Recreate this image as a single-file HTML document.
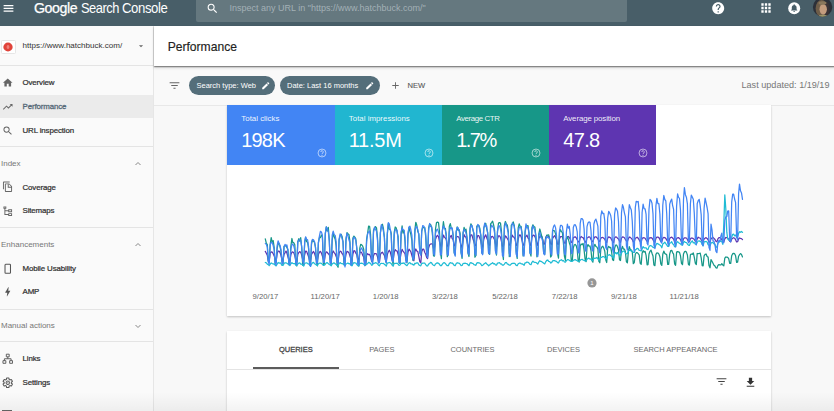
<!DOCTYPE html>
<html><head><meta charset="utf-8">
<style>
*{box-sizing:border-box;margin:0;padding:0}
html,body{width:834px;height:411px;overflow:hidden;background:#f8f8f8;font-family:"Liberation Sans",sans-serif;color:#222}
.abs{position:absolute}
.hw{color:#fff;line-height:17px;white-space:nowrap;transform-origin:0 0}
#hdr{left:0;top:0;width:834px;height:26.200px;background:#485e68}
#search{left:196px;top:0;width:431px;height:22px;background:#65787f;border-radius:0 0 2px 2px}
#side{left:0;top:26.200px;width:153.500px;height:385px;background:#fafafa;border-right:1px solid #e6e6e6}
#titlebar{z-index:2;left:153.500px;top:26.200px;width:681px;height:40.300px;background:#fff;box-shadow:0 .5px 1.200px rgba(0,0,0,.5),0 2px 3px rgba(0,0,0,.12)}
#fbar{left:153.500px;top:66.500px;width:681px;height:39px;background:#f9f9f9;border-bottom:1px solid #e8e8e8}
.navt{left:22.500px;font-size:7.900px;letter-spacing:-.12px;line-height:10px;color:#303030;-webkit-text-stroke:.22px #303030;white-space:nowrap}
.navt.sel{color:#566a78;-webkit-text-stroke:.3px #566a78}
.sec{left:1px;font-size:8px;line-height:10px;color:#777;white-space:nowrap}
.hr{left:0;width:153px;height:1px;background:#e4e4e4}
.card{background:#fff;box-shadow:0 1px 2px rgba(0,0,0,.22)}
.tile{top:105.300px;height:60.100px;color:#fff}
.tile .l{position:absolute;left:14.300px;top:8.900px;font-size:7.900px;line-height:10px;white-space:nowrap;color:rgba(255,255,255,.92)}
.tile .v{position:absolute;left:14.200px;top:23.500px;font-size:20px;line-height:23px;white-space:nowrap}
.chip{top:75.500px;height:19.500px;border-radius:10px;background:#546e7a;color:#fff;font-size:7.500px;line-height:19.500px;padding-left:7.500px;white-space:nowrap}
.xl{top:292.200px;width:40px;text-align:center;font-size:7.700px;line-height:10px;color:#666;white-space:nowrap}
.tab{top:345.200px;font-size:7.500px;line-height:10px;color:#6a6a6a;text-align:center;white-space:nowrap}
.tab.tsel{color:#444;-webkit-text-stroke:.28px #444}
</style></head><body>
<div id="hdr" class="abs"></div>
<div id="search" class="abs"></div>
<svg class="abs" style="left:2px;top:2px" width="13" height="13" viewBox="0 0 24 24"><path d="M3 18h18v-2.300H3V18zm0-5h18v-2.300H3V13zm0-7.300v2.300h18V5.700H3z" fill="#fff"/></svg>
<div class="abs" style="left:34.400px;top:-1.300px;display:flex;align-items:baseline;height:17px;line-height:17px"><span class="hw" style="display:block;width:46.700px;font-size:15px;letter-spacing:-.45px;transform:scaleX(.946);-webkit-text-stroke:.25px #fff">Google</span><span class="hw" style="display:block;width:40.500px;font-size:14.300px;letter-spacing:-.55px;transform:scaleX(.9)">Search</span><span class="hw" style="display:block;font-size:14.300px;letter-spacing:-.45px;transform:scaleX(.92)">Console</span></div>
<svg class="abs" style="left:206px;top:1.500px" width="13" height="13" viewBox="0 0 24 24"><path d="M15.500 14h-.79l-.28-.27A6.470 6.470 0 0016 9.500 6.500 6.500 0 109.500 16c1.610 0 3.090-.59 4.230-1.570l.27.280v.790l5 4.990L20.490 19l-4.990-5zm-6 0C7.010 14 5 11.990 5 9.500S7.010 5 9.500 5 14 7.010 14 9.500 11.990 14 9.500 14z" fill="#fff"/></svg>
<div class="abs" style="left:229.600px;top:2.500px;font-size:9px;color:#a3b0b6;line-height:11px;white-space:nowrap">Inspect any URL in "https://www.hatchbuck.com/"</div>
<svg class="abs" style="left:711px;top:0.600px" width="14.400" height="14.400" viewBox="0 0 24 24"><path d="M12 2C6.480 2 2 6.480 2 12s4.480 10 10 10 10-4.480 10-10S17.520 2 12 2zm1 17h-2v-2h2v2zm2.070-7.750l-.9.920C13.450 12.900 13 13.500 13 15h-2v-.5c0-1.100.45-2.100 1.170-2.830l1.240-1.260c.37-.36.590-.86.590-1.410 0-1.100-.9-2-2-2s-2 .9-2 2H8c0-2.210 1.790-4 4-4s4 1.790 4 4c0 .88-.36 1.680-.93 2.250z" fill="#fff"/></svg>
<svg class="abs" style="left:759px;top:0.800px" width="14" height="14" viewBox="0 0 24 24"><path d="M4 8h4V4H4v4zm6 12h4v-4h-4v4zm-6 0h4v-4H4v4zm0-6h4v-4H4v4zm6 0h4v-4h-4v4zm6-10v4h4V4h-4zm-6 4h4V4h-4v4zm6 6h4v-4h-4v4zm0 6h4v-4h-4v4z" fill="#fff"/></svg>
<svg class="abs" style="left:787.300px;top:0.600px" width="14.400" height="14.400" viewBox="0 0 24 24"><circle cx="12" cy="12" r="10" fill="#fff"/><path d="M12 18.500c.83 0 1.500-.67 1.500-1.500h-3c0 .83.670 1.500 1.500 1.500zm4-4.500v-3c0-1.860-1.060-3.420-2.900-3.830V6.700c0-.6-.5-1.100-1.100-1.100s-1.100.5-1.100 1.100v.470C9.060 7.580 8 9.130 8 11v3l-1.200 1.200v.6h10.400v-.6L16 14z" fill="#485e68"/></svg>
<svg class="abs" style="left:812px;top:-4px" width="22" height="22" viewBox="812 -4 22 22"><defs><clipPath id="av"><circle cx="822.600" cy="7" r="9.700"/></clipPath></defs><g clip-path="url(#av)"><rect x="812" y="-4" width="22" height="22" fill="#2c3039"/><ellipse cx="821.600" cy="8.500" rx="6" ry="8.500" fill="#6e5d49"/><ellipse cx="826.500" cy="9" rx="3" ry="7" fill="#3a3236"/><ellipse cx="823.200" cy="9.300" rx="3.700" ry="5.300" fill="#c49c7e"/><ellipse cx="822.500" cy="3" rx="4" ry="1.800" fill="#8a775c"/><ellipse cx="823" cy="16.500" rx="4.500" ry="1.800" fill="#9a9468"/></g></svg>

<div id="side" class="abs"></div>
<div id="titlebar" class="abs"></div>
<div id="fbar" class="abs"></div>
<div class="abs" style="z-index:3;left:167.700px;top:39.500px;font-size:12.100px;color:#222;line-height:14px;-webkit-text-stroke:.15px #222">Performance</div>
<div class="abs" style="left:1px;top:39.600px;width:14.500px;height:14px;background:#fff;border:1px solid #e6e6e6;border-radius:1.500px"></div>
<svg class="abs" style="left:3.200px;top:41.600px" width="10" height="10" viewBox="0 0 18 18"><ellipse cx="9" cy="9" rx="8.400" ry="7.900" fill="#e0433a"/><ellipse cx="9" cy="9" rx="2.600" ry="3.600" fill="#ee7f78"/></svg>
<div class="abs" style="left:22.500px;top:41.300px;font-size:8.050px;color:#333;line-height:10px;white-space:nowrap">https://www.hatchbuck.com/</div>
<svg class="abs" style="left:136px;top:41px" width="10" height="10" viewBox="0 0 24 24"><path d="M7 10l5 5 5-5z" fill="#666"/></svg>
<div class="abs hr" style="top:65px"></div>
<div class="abs navt" style="top:77.9px">Overview</div><svg class="abs ic" style="left:1.500px;top:76.6px" width="11.500" height="11.500" viewBox="0 0 24 24"><path d="M10 20v-6h4v6h5v-8h3L12 3 2 12h3v8z" fill="#666"/></svg><div class="abs" style="left:0;top:94.7px;width:153px;height:23px;background:#ebebeb"></div><div class="abs navt sel" style="top:101.8px">Performance</div><svg class="abs ic" style="left:1.500px;top:100.5px" width="11.500" height="11.500" viewBox="0 0 24 24"><path d="M16 6l2.29 2.29-4.88 4.88-4-4L2 16.59 3.41 18l6-6 4 4 6.3-6.29L22 12V6z" fill="#666"/></svg><div class="abs navt" style="top:125.8px">URL inspection</div><svg class="abs ic" style="left:1.500px;top:124.5px" width="11.500" height="11.500" viewBox="0 0 24 24"><path d="M15.5 14h-.79l-.28-.27A6.47 6.47 0 0016 9.5 6.5 6.5 0 109.5 16c1.61 0 3.09-.59 4.23-1.57l.27.28v.79l5 4.99L20.490 19l-4.990-5zm-6 0C7.010 14 5 11.990 5 9.500S7.010 5 9.500 5 14 7.010 14 9.500 11.990 14 9.500 14z" fill="#666"/></svg><div class="abs hr" style="top:146px"></div><div class="abs sec" style="top:158.8px">Index</div><svg class="abs" style="left:132px;top:158.0px" width="12" height="12" viewBox="0 0 24 24"><path d="M7 14 L12 9 L17 14" fill="none" stroke="#888" stroke-width="2"/></svg><div class="abs navt" style="top:182.7px">Coverage</div><svg class="abs ic" style="left:1.500px;top:181.4px" width="11.500" height="11.500" viewBox="0 0 24 24"><path d="M16 1H4c-1.100 0-2 .9-2 2v14h2V3h12V1zm-1 4l6 6v10c0 1.100-.9 2-2 2H7.990C6.890 23 6 22.100 6 21l.010-14c0-1.100.89-2 1.990-2h7zm-1 7h5.500L14 6.500V12zM8 7v14h11v-7h-7V7z" fill="#666" fill-rule="evenodd"/></svg><div class="abs navt" style="top:206.4px">Sitemaps</div><svg class="abs ic" style="left:1.500px;top:205.1px" width="11.500" height="11.500" viewBox="0 0 24 24"><path d="M3 3h6v5H7v3h6V9h8v6h-8v-2H7v6h6v-2h8v6h-8v-2H5V8H3zm2 2v1h2V5zm10 6v2h4v-2zm0 8v2h4v-2z" fill="#666" fill-rule="evenodd"/></svg><div class="abs hr" style="top:227px"></div><div class="abs sec" style="top:239.6px">Enhancements</div><svg class="abs" style="left:132px;top:238.8px" width="12" height="12" viewBox="0 0 24 24"><path d="M7 14 L12 9 L17 14" fill="none" stroke="#888" stroke-width="2"/></svg><div class="abs navt" style="top:263.8px">Mobile Usability</div><svg class="abs ic" style="left:1.500px;top:262.5px" width="11.500" height="11.500" viewBox="0 0 24 24"><rect x="6.300" y="2.700" width="11.400" height="18.600" rx="1.500" fill="none" stroke="#555" stroke-width="2.200"/></svg><div class="abs navt" style="top:287.4px">AMP</div><svg class="abs ic" style="left:1.500px;top:286.1px" width="11.500" height="11.500" viewBox="0 0 24 24"><path d="M11 21.500h-1l1-7.500H7.200c-.6 0-.6-.3-.4-.7C8.500 10.400 10.400 7.200 13 2.500h1l-1 7.500h3.800c.5 0 .6.300.4.600C13 17.500 11 21.500 11 21.500z" fill="#555"/></svg><div class="abs hr" style="top:308.500px"></div><div class="abs sec" style="top:320.7px">Manual actions</div><svg class="abs" style="left:132px;top:319.9px" width="12" height="12" viewBox="0 0 24 24"><path d="M7 10 L12 15 L17 10" fill="none" stroke="#888" stroke-width="2"/></svg><div class="abs hr" style="top:341px"></div><div class="abs navt" style="top:354.4px">Links</div><svg class="abs ic" style="left:1.500px;top:353.1px" width="11.500" height="11.500" viewBox="0 0 24 24"><path d="M9 2.500h6v5.500H9zM12 8v4M5 16v-4h14v4M2 16h6v5.500H2zM16 16h6v5.500h-6z" fill="none" stroke="#555" stroke-width="1.900"/></svg><div class="abs navt" style="top:378.4px">Settings</div><svg class="abs ic" style="left:1.500px;top:377.1px" width="11.500" height="11.500" viewBox="0 0 24 24"><path d="M19.430 12.980c.04-.32.07-.64.07-.98s-.03-.66-.07-.98l2.110-1.650c.19-.15.24-.42.12-.64l-2-3.460c-.12-.22-.39-.3-.61-.22l-2.490 1c-.52-.4-1.080-.73-1.690-.98l-.38-2.650C14.460 2.180 14.250 2 14 2h-4c-.25 0-.46.18-.49.42l-.38 2.650c-.61.25-1.170.59-1.690.98l-2.490-1c-.23-.09-.49 0-.61.22l-2 3.460c-.13.22-.07.49.12.64l2.110 1.650c-.04.32-.07.65-.07.980s.03.660.07.980l-2.110 1.650c-.19.150-.24.420-.12.640l2 3.460c.12.220.39.300.61.220l2.490-1c.52.400 1.080.730 1.690.980l.38 2.650c.03.240.24.420.49.420h4c.25 0 .46-.18.490-.42l.38-2.650c.61-.25 1.170-.59 1.690-.98l2.490 1c.23.090.49 0 .61-.22l2-3.460c.12-.22.07-.49-.12-.64l-2.110-1.650zM12 15.500c-1.930 0-3.500-1.570-3.500-3.500s1.570-3.500 3.500-3.500 3.500 1.570 3.500 3.500-1.570 3.500-3.500 3.500z" fill="none" stroke="#555" stroke-width="2.100"/><circle cx="12" cy="12" r="1.200" fill="#555"/></svg><div class="abs" style="left:2px;top:409.600px;width:10px;height:1.400px;background:#666"></div>
<svg class="abs" style="left:168px;top:78.500px" width="13" height="13" viewBox="0 0 24 24"><path d="M10 18h4v-2h-4v2zM3 6v2h18V6H3zm3 7h12v-2H6v2z" fill="#666"/></svg>
<div class="abs chip" style="left:189px;width:86px">Search type: Web</div>
<svg class="abs" style="left:260.500px;top:80.500px" width="9.500" height="9.500" viewBox="0 0 24 24"><path d="M3 17.250V21h3.750L17.810 9.940l-3.750-3.750L3 17.250zM20.710 7.040c.39-.39.39-1.020 0-1.410l-2.340-2.340c-.39-.39-1.020-.39-1.410 0l-1.830 1.830 3.750 3.750 1.830-1.830z" fill="#fff"/></svg>
<div class="abs chip" style="left:279.500px;width:100px">Date: Last 16 months</div>
<svg class="abs" style="left:364.500px;top:80.500px" width="9.500" height="9.500" viewBox="0 0 24 24"><path d="M3 17.250V21h3.750L17.810 9.940l-3.750-3.750L3 17.250zM20.710 7.040c.39-.39.39-1.020 0-1.410l-2.340-2.340c-.39-.39-1.020-.39-1.410 0l-1.830 1.830 3.750 3.750 1.830-1.830z" fill="#fff"/></svg>
<svg class="abs" style="left:390px;top:79.500px" width="11" height="11" viewBox="0 0 24 24"><path d="M19 13h-6v6h-2v-6H5v-2h6V5h2v6h6v2z" fill="#666"/></svg>
<div class="abs" style="left:407.500px;top:81px;font-size:7.600px;line-height:10px;color:#5a5a5a;-webkit-text-stroke:.12px #5a5a5a">NEW</div>
<div class="abs" style="left:741.500px;top:80.200px;font-size:9.100px;line-height:10px;color:#777;white-space:nowrap">Last updated: 1/19/19</div>

<div class="abs card" style="left:227px;top:105px;width:543.500px;height:211.300px"></div>
<div class="abs tile" style="left:227.0px;width:107.5px;background:#4285f4"><div class="l" style="letter-spacing:0px">Total clicks</div><div class="v" style="letter-spacing:-.8px">198K</div></div><svg class="abs" style="left:317.0px;top:148.300px" width="10" height="10" viewBox="0 0 24 24"><circle cx="12" cy="12" r="9.500" fill="none" stroke="rgba(255,255,255,.7)" stroke-width="2"/><path d="M9.2 9.600a2.900 2.900 0 115 2c-1.200 1-2.100 1.500-2.100 3" fill="none" stroke="rgba(255,255,255,.75)" stroke-width="2"/><circle cx="12" cy="17.600" r="1.300" fill="rgba(255,255,255,.75)"/></svg><div class="abs tile" style="left:334.5px;width:107.5px;background:#21b6d0"><div class="l" style="letter-spacing:0px">Total impressions</div><div class="v" style="letter-spacing:-.25px">11.5M</div></div><svg class="abs" style="left:424.0px;top:148.300px" width="10" height="10" viewBox="0 0 24 24"><circle cx="12" cy="12" r="9.500" fill="none" stroke="rgba(255,255,255,.7)" stroke-width="2"/><path d="M9.2 9.600a2.900 2.900 0 115 2c-1.200 1-2.100 1.500-2.100 3" fill="none" stroke="rgba(255,255,255,.75)" stroke-width="2"/><circle cx="12" cy="17.600" r="1.300" fill="rgba(255,255,255,.75)"/></svg><div class="abs tile" style="left:442.0px;width:107.0px;background:#179788"><div class="l" style="letter-spacing:-.4px">Average CTR</div><div class="v" style="letter-spacing:-1.500px">1.7%</div></div><svg class="abs" style="left:531.0px;top:148.300px" width="10" height="10" viewBox="0 0 24 24"><circle cx="12" cy="12" r="9.500" fill="none" stroke="rgba(255,255,255,.7)" stroke-width="2"/><path d="M9.2 9.600a2.900 2.900 0 115 2c-1.200 1-2.100 1.500-2.100 3" fill="none" stroke="rgba(255,255,255,.75)" stroke-width="2"/><circle cx="12" cy="17.600" r="1.300" fill="rgba(255,255,255,.75)"/></svg><div class="abs tile" style="left:549.0px;width:107.4px;background:#5e35b1"><div class="l" style="letter-spacing:-.12px">Average position</div><div class="v" style="letter-spacing:-.65px">47.8</div></div><svg class="abs" style="left:638.0px;top:148.300px" width="10" height="10" viewBox="0 0 24 24"><circle cx="12" cy="12" r="9.500" fill="none" stroke="rgba(255,255,255,.7)" stroke-width="2"/><path d="M9.2 9.600a2.900 2.900 0 115 2c-1.200 1-2.100 1.500-2.100 3" fill="none" stroke="rgba(255,255,255,.75)" stroke-width="2"/><circle cx="12" cy="17.600" r="1.300" fill="rgba(255,255,255,.75)"/></svg><svg class="abs" style="left:0;top:0" width="834" height="411" viewBox="0 0 834 411" fill="none" stroke-width="1.250" stroke-linejoin="round" stroke-linecap="round"><path d="M265.3 251.4 L266.3 253.3 L267.3 255.3 L268.3 260.6 L269.2 260.9 L270.2 253.2 L271.2 251.8 L272.2 252.1 L273.2 253.8 L274.2 255.9 L275.1 259.0 L276.1 261.9 L277.1 253.6 L278.1 251.2 L279.1 251.1 L280.1 252.7 L281.0 255.3 L282.0 259.9 L283.0 260.7 L284.0 254.3 L285.0 252.8 L286.0 251.1 L286.9 253.1 L287.9 256.5 L288.9 259.9 L289.9 260.8 L290.9 254.4 L291.9 252.2 L292.8 251.8 L293.8 252.9 L294.8 255.6 L295.8 259.9 L296.8 261.7 L297.8 254.6 L298.8 252.5 L299.7 251.6 L300.7 252.4 L301.7 255.1 L302.7 259.1 L303.7 259.9 L304.7 254.5 L305.6 251.1 L306.6 251.4 L307.6 254.0 L308.6 256.7 L309.6 260.7 L310.6 260.0 L311.5 254.5 L312.5 252.6 L313.5 251.5 L314.5 253.4 L315.5 256.6 L316.5 260.3 L317.4 260.4 L318.4 254.6 L319.4 252.2 L320.4 251.3 L321.4 253.1 L322.4 256.0 L323.4 259.6 L324.3 261.4 L325.3 254.1 L326.3 251.8 L327.3 252.3 L328.3 253.8 L329.3 254.7 L330.2 259.4 L331.2 260.9 L332.2 253.6 L333.2 251.0 L334.2 252.6 L335.2 253.9 L336.1 256.2 L337.1 258.9 L338.1 260.9 L339.1 253.3 L340.1 251.2 L341.1 251.5 L342.0 253.5 L343.0 254.5 L344.0 258.7 L345.0 260.1 L346.0 254.3 L347.0 251.3 L347.9 251.8 L348.9 252.7 L349.9 255.8 L350.9 259.0 L351.9 261.0 L352.9 254.1 L353.9 250.6 L354.8 250.8 L355.8 253.2 L356.8 254.6 L357.8 259.6 L358.8 259.1 L359.8 253.1 L360.7 251.9 L361.7 252.6 L362.7 255.3 L363.7 256.9 L364.7 265.7 L365.7 264.7 L366.6 255.2 L367.6 253.7 L368.6 254.7 L369.6 254.4 L370.6 256.7 L371.6 261.0 L372.5 261.9 L373.5 255.7 L374.5 253.5 L375.5 253.7 L376.5 253.9 L377.5 256.9 L378.5 261.3 L379.4 262.3 L380.4 254.3 L381.4 252.8 L382.4 252.2 L383.4 253.8 L384.4 255.3 L385.3 259.2 L386.3 262.0 L387.3 254.6 L388.3 251.9 L389.3 250.2 L390.3 252.0 L391.2 255.8 L392.2 260.3 L393.2 260.1 L394.2 252.4 L395.2 249.6 L396.2 250.8 L397.1 250.9 L398.1 254.2 L399.1 259.1 L400.1 258.8 L401.1 253.2 L402.1 249.4 L403.0 251.0 L404.0 252.4 L405.0 253.7 L406.0 260.2 L407.0 259.9 L408.0 252.4 L409.0 249.1 L409.9 250.3 L410.9 252.0 L411.9 255.5 L412.9 259.0 L413.9 260.8 L414.9 251.6 L415.8 249.0 L416.8 251.0 L417.8 251.6 L418.8 256.3 L419.8 261.7 L420.8 262.9 L421.7 251.9 L422.7 249.2 L423.7 249.1 L424.7 252.3 L425.7 254.2 L426.7 257.6 L427.6 258.5 L428.6 248.0 L429.6 244.9 L430.6 244.0 L431.6 243.8 L432.6 244.2 L433.5 248.4 L434.5 247.1 L435.5 239.2 L436.5 236.5 L437.5 235.3 L438.5 236.7 L439.5 241.7 L440.4 244.7 L441.4 247.2 L442.4 239.5 L443.4 235.1 L444.4 237.1 L445.4 238.2 L446.3 239.4 L447.3 245.5 L448.3 247.3 L449.3 239.4 L450.3 236.6 L451.3 235.4 L452.2 238.6 L453.2 239.7 L454.2 245.8 L455.2 245.4 L456.2 237.6 L457.2 236.5 L458.1 236.6 L459.1 237.7 L460.1 241.8 L461.1 245.3 L462.1 248.0 L463.1 240.0 L464.1 234.7 L465.0 236.5 L466.0 237.4 L467.0 241.0 L468.0 246.3 L469.0 248.1 L470.0 237.7 L470.9 234.8 L471.9 234.8 L472.9 238.7 L473.9 241.6 L474.9 245.4 L475.9 245.6 L476.8 238.6 L477.8 235.5 L478.8 235.6 L479.8 238.2 L480.8 240.7 L481.8 246.0 L482.7 247.2 L483.7 239.7 L484.7 236.6 L485.7 234.8 L486.7 237.7 L487.7 240.3 L488.6 245.0 L489.6 245.3 L490.6 238.8 L491.6 236.5 L492.6 236.4 L493.6 238.0 L494.6 239.7 L495.5 244.2 L496.5 246.6 L497.5 238.9 L498.5 235.9 L499.5 235.8 L500.5 237.3 L501.4 241.1 L502.4 246.1 L503.4 246.5 L504.4 239.5 L505.4 235.9 L506.4 237.0 L507.3 238.5 L508.3 240.1 L509.3 245.2 L510.3 245.0 L511.3 238.4 L512.3 235.2 L513.2 236.8 L514.2 237.4 L515.2 239.6 L516.2 245.5 L517.2 244.4 L518.2 239.1 L519.2 235.4 L520.1 234.9 L521.1 236.7 L522.1 240.6 L523.1 245.2 L524.1 245.2 L525.1 237.4 L526.0 236.5 L527.0 235.1 L528.0 238.1 L529.0 239.2 L530.0 245.1 L531.0 245.4 L531.9 237.4 L532.9 235.4 L533.9 235.1 L534.9 236.6 L535.9 239.4 L536.9 243.5 L537.8 245.4 L538.8 238.3 L539.8 236.7 L540.8 235.6 L541.8 236.9 L542.8 240.4 L543.7 244.6 L544.7 243.6 L545.7 237.5 L546.7 235.9 L547.7 235.9 L548.7 236.6 L549.7 239.8 L550.6 243.7 L551.6 244.6 L552.6 238.5 L553.6 236.9 L554.6 235.7 L555.6 237.4 L556.5 239.5 L557.5 244.1 L558.5 244.3 L559.5 238.7 L560.5 236.7 L561.5 236.5 L562.4 236.7 L563.4 239.7 L564.4 243.0 L565.4 243.3 L566.4 238.5 L567.4 237.2 L568.3 236.4 L569.3 237.5 L570.3 239.2 L571.3 242.3 L572.3 242.5 L573.3 237.8 L574.3 237.1 L575.2 236.8 L576.2 237.7 L577.2 239.7 L578.2 241.8 L579.2 242.0 L580.2 237.8 L581.1 236.5 L582.1 237.3 L583.1 237.6 L584.1 239.8 L585.1 242.0 L586.1 242.0 L587.0 237.8 L588.0 237.5 L589.0 236.7 L590.0 237.3 L591.0 239.5 L592.0 241.3 L592.9 241.6 L593.9 238.5 L594.9 236.9 L595.9 236.8 L596.9 237.7 L597.9 238.9 L598.8 241.0 L599.8 241.5 L600.8 238.3 L601.8 237.5 L602.8 237.4 L603.8 238.2 L604.8 239.3 L605.7 241.2 L606.7 242.5 L607.7 238.2 L608.7 236.9 L609.7 237.4 L610.7 237.9 L611.6 239.7 L612.6 241.3 L613.6 242.5 L614.6 237.9 L615.6 236.9 L616.6 237.1 L617.5 238.2 L618.5 238.9 L619.5 241.0 L620.5 242.4 L621.5 238.1 L622.5 236.9 L623.4 237.1 L624.4 237.8 L625.4 239.5 L626.4 241.0 L627.4 241.5 L628.4 238.6 L629.3 237.0 L630.3 237.4 L631.3 238.4 L632.3 239.6 L633.3 242.0 L634.3 241.5 L635.3 238.0 L636.2 237.8 L637.2 237.2 L638.2 238.2 L639.2 239.9 L640.2 241.8 L641.2 242.3 L642.1 238.3 L643.1 237.9 L644.1 237.7 L645.1 238.2 L646.1 240.0 L647.1 241.4 L648.0 241.9 L649.0 238.2 L650.0 237.8 L651.0 237.7 L652.0 238.1 L653.0 239.7 L653.9 241.5 L654.9 242.3 L655.9 238.4 L656.9 237.2 L657.9 237.1 L658.9 237.6 L659.9 239.5 L660.8 241.6 L661.8 241.6 L662.8 238.3 L663.8 237.4 L664.8 237.6 L665.8 238.4 L666.7 240.0 L667.7 241.2 L668.7 242.4 L669.7 238.4 L670.7 237.5 L671.7 237.1 L672.6 238.0 L673.6 239.1 L674.6 241.9 L675.6 242.0 L676.6 238.6 L677.6 237.8 L678.5 237.6 L679.5 238.4 L680.5 239.6 L681.5 242.1 L682.5 242.1 L683.5 238.8 L684.4 237.8 L685.4 237.8 L686.4 238.0 L687.4 239.4 L688.4 241.6 L689.4 241.8 L690.4 238.9 L691.3 238.0 L692.3 238.2 L693.3 238.6 L694.3 239.5 L695.3 241.2 L696.3 241.7 L697.2 238.8 L698.2 237.2 L699.2 237.8 L700.2 238.0 L701.2 239.8 L702.2 241.3 L703.1 241.5 L704.1 239.0 L705.1 238.1 L706.1 237.7 L707.1 238.4 L708.1 239.8 L709.0 242.1 L710.0 242.1 L711.0 238.9 L712.0 237.9 L713.0 237.5 L714.0 238.4 L715.0 239.5 L715.9 241.2 L716.9 241.8 L717.9 238.9 L718.9 237.6 L719.9 237.7 L720.9 238.3 L721.8 239.6 L722.8 241.7 L723.8 241.9 L724.8 238.8 L725.8 237.5 L726.8 237.6 L727.7 238.2 L728.7 239.5 L729.7 241.3 L730.7 241.9 L731.7 239.1 L732.7 238.2 L733.6 237.7 L734.6 238.2 L735.6 239.7 L736.6 241.9 L737.6 241.7 L738.6 239.0 L739.5 238.0 L740.5 238.4 L741.5 238.6 L742.5 239.6" stroke="#5e35b1"/>
<path d="M265.3 238.9 L266.3 243.2 L267.3 244.6 L268.3 261.4 L269.2 262.0 L270.2 244.4 L271.2 237.6 L272.2 242.1 L273.2 240.6 L274.2 247.6 L275.1 264.0 L276.1 262.2 L277.1 248.7 L278.1 243.8 L279.1 243.3 L280.1 247.0 L281.0 251.2 L282.0 261.4 L283.0 264.5 L284.0 246.4 L285.0 245.9 L286.0 245.4 L286.9 247.4 L287.9 249.5 L288.9 264.7 L289.9 262.4 L290.9 246.1 L291.9 238.5 L292.8 242.7 L293.8 242.7 L294.8 244.7 L295.8 264.5 L296.8 266.0 L297.8 241.4 L298.8 238.6 L299.7 241.2 L300.7 237.7 L301.7 247.6 L302.7 265.3 L303.7 265.2 L304.7 242.1 L305.6 237.4 L306.6 241.7 L307.6 242.2 L308.6 249.0 L309.6 263.2 L310.6 263.1 L311.5 244.0 L312.5 239.7 L313.5 241.4 L314.5 242.3 L315.5 247.7 L316.5 263.3 L317.4 265.8 L318.4 242.5 L319.4 237.7 L320.4 237.7 L321.4 235.0 L322.4 236.8 L323.4 265.2 L324.3 264.0 L325.3 233.9 L326.3 226.9 L327.3 231.2 L328.3 227.4 L329.3 240.4 L330.2 261.8 L331.2 265.2 L332.2 240.5 L333.2 233.0 L334.2 236.8 L335.2 239.2 L336.1 245.6 L337.1 265.0 L338.1 267.3 L339.1 239.8 L340.1 235.9 L341.1 234.2 L342.0 236.2 L343.0 241.5 L344.0 264.6 L345.0 265.2 L346.0 240.0 L347.0 232.7 L347.9 233.7 L348.9 234.4 L349.9 241.2 L350.9 264.5 L351.9 265.4 L352.9 238.0 L353.9 236.1 L354.8 237.1 L355.8 238.8 L356.8 248.3 L357.8 262.5 L358.8 266.1 L359.8 248.2 L360.7 244.3 L361.7 244.9 L362.7 246.2 L363.7 249.1 L364.7 262.5 L365.7 264.2 L366.6 239.0 L367.6 233.3 L368.6 226.2 L369.6 226.3 L370.6 234.9 L371.6 260.3 L372.5 261.9 L373.5 230.4 L374.5 228.1 L375.5 226.6 L376.5 227.8 L377.5 237.7 L378.5 262.8 L379.4 259.7 L380.4 233.0 L381.4 225.9 L382.4 224.2 L383.4 228.4 L384.4 237.8 L385.3 256.2 L386.3 263.0 L387.3 234.7 L388.3 223.6 L389.3 229.2 L390.3 229.7 L391.2 233.2 L392.2 258.5 L393.2 265.6 L394.2 232.4 L395.2 227.0 L396.2 227.9 L397.1 232.1 L398.1 236.5 L399.1 262.9 L400.1 263.5 L401.1 234.9 L402.1 225.9 L403.0 233.0 L404.0 230.5 L405.0 240.9 L406.0 259.5 L407.0 262.7 L408.0 234.6 L409.0 227.5 L409.9 231.0 L410.9 234.6 L411.9 240.6 L412.9 260.3 L413.9 256.9 L414.9 229.7 L415.8 222.3 L416.8 225.3 L417.8 231.5 L418.8 233.7 L419.8 252.6 L420.8 254.6 L421.7 231.1 L422.7 227.2 L423.7 227.8 L424.7 227.5 L425.7 236.6 L426.7 254.1 L427.6 256.1 L428.6 228.0 L429.6 224.1 L430.6 224.5 L431.6 226.9 L432.6 236.1 L433.5 255.8 L434.5 256.1 L435.5 229.1 L436.5 222.6 L437.5 222.2 L438.5 222.6 L439.5 231.7 L440.4 251.8 L441.4 258.7 L442.4 230.7 L443.4 221.7 L444.4 228.3 L445.4 228.4 L446.3 236.9 L447.3 256.7 L448.3 253.5 L449.3 226.5 L450.3 223.6 L451.3 228.1 L452.2 229.0 L453.2 235.7 L454.2 253.0 L455.2 254.9 L456.2 232.0 L457.2 226.8 L458.1 230.4 L459.1 229.6 L460.1 233.1 L461.1 252.8 L462.1 258.3 L463.1 232.8 L464.1 227.4 L465.0 231.0 L466.0 229.1 L467.0 237.0 L468.0 253.2 L469.0 256.5 L470.0 228.1 L470.9 223.9 L471.9 225.8 L472.9 229.7 L473.9 233.7 L474.9 257.1 L475.9 255.4 L476.8 226.0 L477.8 225.7 L478.8 225.5 L479.8 228.2 L480.8 235.3 L481.8 253.0 L482.7 253.5 L483.7 228.4 L484.7 225.1 L485.7 223.2 L486.7 228.9 L487.7 232.5 L488.6 253.1 L489.6 254.4 L490.6 224.0 L491.6 222.7 L492.6 221.2 L493.6 224.8 L494.6 230.0 L495.5 250.5 L496.5 255.0 L497.5 231.4 L498.5 223.0 L499.5 222.6 L500.5 223.1 L501.4 230.8 L502.4 251.6 L503.4 259.5 L504.4 225.5 L505.4 221.5 L506.4 224.3 L507.3 224.9 L508.3 231.9 L509.3 256.6 L510.3 254.1 L511.3 225.2 L512.3 224.1 L513.2 221.9 L514.2 225.1 L515.2 234.5 L516.2 251.9 L517.2 258.4 L518.2 227.8 L519.2 223.8 L520.1 226.4 L521.1 226.4 L522.1 233.6 L523.1 256.0 L524.1 253.0 L525.1 232.1 L526.0 227.5 L527.0 225.8 L528.0 225.6 L529.0 233.1 L530.0 252.5 L531.0 256.1 L531.9 227.7 L532.9 224.8 L533.9 226.6 L534.9 227.1 L535.9 236.6 L536.9 256.8 L537.8 254.4 L538.8 233.9 L539.8 229.0 L540.8 232.7 L541.8 236.3 L542.8 239.6 L543.7 253.4 L544.7 254.4 L545.7 238.8 L546.7 235.1 L547.7 235.0 L548.7 234.8 L549.7 239.2 L550.6 257.0 L551.6 255.7 L552.6 231.1 L553.6 230.4 L554.6 231.1 L555.6 233.9 L556.5 239.1 L557.5 253.5 L558.5 258.1 L559.5 232.5 L560.5 229.7 L561.5 231.7 L562.4 232.4 L563.4 243.0 L564.4 256.0 L565.4 260.4 L566.4 239.7 L567.4 236.6 L568.3 239.2 L569.3 242.7 L570.3 245.7 L571.3 261.4 L572.3 260.5 L573.3 247.7 L574.3 244.8 L575.2 244.5 L576.2 245.7 L577.2 249.5 L578.2 260.8 L579.2 262.0 L580.2 246.0 L581.1 244.0 L582.1 244.7 L583.1 243.4 L584.1 250.1 L585.1 259.1 L586.1 261.7 L587.0 247.1 L588.0 244.6 L589.0 246.2 L590.0 246.0 L591.0 250.5 L592.0 260.6 L592.9 262.1 L593.9 246.8 L594.9 244.3 L595.9 246.5 L596.9 247.0 L597.9 249.3 L598.8 261.1 L599.8 262.8 L600.8 249.3 L601.8 247.0 L602.8 246.2 L603.8 248.1 L604.8 251.3 L605.7 259.8 L606.7 262.5 L607.7 248.1 L608.7 246.3 L609.7 247.7 L610.7 247.4 L611.6 251.9 L612.6 259.8 L613.6 260.5 L614.6 248.2 L615.6 245.1 L616.6 245.0 L617.5 246.7 L618.5 250.0 L619.5 259.8 L620.5 260.5 L621.5 249.3 L622.5 246.4 L623.4 249.0 L624.4 249.0 L625.4 251.8 L626.4 261.8 L627.4 262.8 L628.4 251.1 L629.3 246.7 L630.3 249.4 L631.3 250.1 L632.3 252.1 L633.3 263.7 L634.3 262.5 L635.3 254.2 L636.2 252.7 L637.2 252.6 L638.2 253.6 L639.2 255.0 L640.2 263.3 L641.2 264.3 L642.1 253.3 L643.1 250.7 L644.1 252.1 L645.1 251.3 L646.1 255.4 L647.1 264.8 L648.0 264.6 L649.0 254.0 L650.0 251.3 L651.0 250.1 L652.0 253.3 L653.0 256.0 L653.9 265.0 L654.9 265.7 L655.9 254.4 L656.9 252.8 L657.9 253.0 L658.9 254.1 L659.9 256.7 L660.8 263.9 L661.8 265.4 L662.8 254.2 L663.8 251.1 L664.8 253.5 L665.8 254.1 L666.7 254.8 L667.7 264.4 L668.7 264.3 L669.7 254.0 L670.7 250.6 L671.7 250.3 L672.6 252.6 L673.6 254.2 L674.6 263.8 L675.6 265.3 L676.6 252.1 L677.6 251.6 L678.5 251.9 L679.5 252.3 L680.5 255.9 L681.5 263.3 L682.5 264.7 L683.5 253.9 L684.4 251.9 L685.4 251.3 L686.4 252.1 L687.4 255.0 L688.4 264.3 L689.4 265.2 L690.4 254.7 L691.3 254.0 L692.3 254.3 L693.3 252.9 L694.3 257.4 L695.3 263.2 L696.3 264.6 L697.2 253.5 L698.2 253.6 L699.2 253.5 L700.2 253.1 L701.2 257.9 L702.2 265.6 L703.1 265.9 L704.1 255.9 L705.1 254.4 L706.1 254.0 L707.1 256.5 L708.1 257.1 L709.0 265.6 L710.0 267.8 L711.0 259.6 L712.0 261.3 L713.0 263.3 L714.0 265.3 L715.0 266.1 L715.9 267.7 L716.9 268.2 L717.9 265.4 L718.9 264.6 L719.9 264.8 L720.9 265.0 L721.8 263.7 L722.8 265.0 L723.8 265.9 L724.8 258.2 L725.8 257.0 L726.8 257.1 L727.7 257.4 L728.7 258.6 L729.7 263.3 L730.7 263.4 L731.7 255.7 L732.7 253.7 L733.6 253.4 L734.6 253.7 L735.6 255.8 L736.6 262.4 L737.6 262.2 L738.6 256.2 L739.5 254.7 L740.5 253.6 L741.5 254.4 L742.5 256.9" stroke="#179788"/>
<path d="M265.3 262.5 L266.3 262.8 L267.3 264.1 L268.3 264.6 L269.2 265.7 L270.2 264.2 L271.2 262.9 L272.2 263.6 L273.2 263.8 L274.2 264.2 L275.1 265.1 L276.1 265.9 L277.1 264.2 L278.1 262.5 L279.1 263.2 L280.1 262.8 L281.0 263.6 L282.0 265.4 L283.0 265.5 L284.0 263.6 L285.0 262.8 L286.0 262.9 L286.9 263.3 L287.9 264.0 L288.9 264.7 L289.9 265.5 L290.9 263.7 L291.9 262.7 L292.8 263.3 L293.8 263.6 L294.8 263.5 L295.8 265.2 L296.8 265.4 L297.8 264.2 L298.8 263.1 L299.7 262.9 L300.7 264.0 L301.7 264.0 L302.7 265.1 L303.7 266.0 L304.7 263.5 L305.6 263.0 L306.6 262.8 L307.6 263.6 L308.6 263.9 L309.6 265.0 L310.6 266.1 L311.5 264.2 L312.5 262.8 L313.5 262.4 L314.5 263.7 L315.5 264.2 L316.5 265.1 L317.4 265.7 L318.4 263.8 L319.4 263.2 L320.4 263.2 L321.4 263.3 L322.4 264.4 L323.4 265.4 L324.3 265.2 L325.3 264.2 L326.3 262.9 L327.3 262.7 L328.3 263.6 L329.3 264.5 L330.2 264.9 L331.2 265.8 L332.2 264.0 L333.2 263.1 L334.2 262.8 L335.2 263.9 L336.1 264.3 L337.1 265.5 L338.1 265.1 L339.1 263.7 L340.1 262.6 L341.1 263.4 L342.0 263.6 L343.0 263.9 L344.0 264.8 L345.0 265.6 L346.0 264.0 L347.0 263.5 L347.9 263.0 L348.9 263.8 L349.9 263.7 L350.9 264.8 L351.9 265.9 L352.9 263.9 L353.9 262.6 L354.8 262.8 L355.8 263.0 L356.8 264.3 L357.8 265.7 L358.8 265.8 L359.8 263.3 L360.7 263.3 L361.7 263.2 L362.7 263.5 L363.7 264.2 L364.7 265.4 L365.7 265.0 L366.6 264.1 L367.6 263.6 L368.6 262.4 L369.6 262.9 L370.6 263.5 L371.6 265.3 L372.5 264.9 L373.5 263.1 L374.5 263.3 L375.5 262.7 L376.5 263.0 L377.5 263.9 L378.5 265.2 L379.4 265.8 L380.4 263.8 L381.4 263.3 L382.4 263.5 L383.4 263.3 L384.4 264.4 L385.3 264.9 L386.3 266.1 L387.3 263.1 L388.3 262.8 L389.3 262.5 L390.3 262.9 L391.2 263.6 L392.2 265.2 L393.2 266.1 L394.2 263.3 L395.2 263.4 L396.2 263.3 L397.1 263.2 L398.1 264.1 L399.1 265.4 L400.1 265.0 L401.1 263.5 L402.1 263.2 L403.0 263.3 L404.0 262.9 L405.0 264.2 L406.0 264.9 L407.0 265.7 L408.0 264.0 L409.0 263.0 L409.9 262.6 L410.9 263.8 L411.9 263.8 L412.9 264.7 L413.9 265.1 L414.9 263.2 L415.8 263.6 L416.8 262.8 L417.8 262.9 L418.8 264.7 L419.8 265.5 L420.8 265.8 L421.7 263.6 L422.7 263.1 L423.7 263.0 L424.7 263.0 L425.7 264.7 L426.7 265.8 L427.6 266.0 L428.6 264.1 L429.6 263.5 L430.6 262.4 L431.6 262.9 L432.6 264.6 L433.5 265.2 L434.5 265.7 L435.5 263.9 L436.5 263.2 L437.5 262.8 L438.5 263.3 L439.5 264.3 L440.4 265.6 L441.4 265.7 L442.4 264.1 L443.4 262.9 L444.4 262.7 L445.4 263.5 L446.3 264.7 L447.3 265.7 L448.3 265.7 L449.3 263.5 L450.3 262.6 L451.3 263.1 L452.2 263.0 L453.2 264.0 L454.2 265.3 L455.2 265.7 L456.2 263.6 L457.2 262.7 L458.1 263.1 L459.1 263.1 L460.1 264.2 L461.1 265.6 L462.1 265.5 L463.1 263.4 L464.1 263.5 L465.0 263.1 L466.0 263.5 L467.0 263.7 L468.0 264.7 L469.0 265.7 L470.0 263.1 L470.9 262.6 L471.9 263.3 L472.9 263.4 L473.9 264.6 L474.9 264.9 L475.9 265.3 L476.8 263.1 L477.8 262.6 L478.8 262.8 L479.8 263.1 L480.8 264.0 L481.8 265.7 L482.7 265.4 L483.7 264.2 L484.7 263.4 L485.7 262.7 L486.7 263.9 L487.7 264.6 L488.6 265.8 L489.6 265.0 L490.6 264.0 L491.6 263.6 L492.6 262.6 L493.6 263.8 L494.6 263.7 L495.5 265.0 L496.5 265.1 L497.5 263.1 L498.5 262.9 L499.5 262.6 L500.5 264.0 L501.4 263.8 L502.4 265.2 L503.4 265.2 L504.4 264.1 L505.4 262.7 L506.4 262.5 L507.3 263.9 L508.3 264.3 L509.3 265.2 L510.3 265.1 L511.3 263.9 L512.3 263.4 L513.2 263.3 L514.2 263.2 L515.2 263.8 L516.2 265.4 L517.2 265.7 L518.2 263.8 L519.2 263.2 L520.1 263.1 L521.1 263.8 L522.1 263.9 L523.1 264.4 L524.1 265.3 L525.1 262.8 L526.0 262.8 L527.0 262.0 L528.0 262.3 L529.0 263.1 L530.0 264.5 L531.0 264.7 L531.9 262.3 L532.9 261.1 L533.9 262.1 L534.9 262.5 L535.9 262.4 L536.9 263.3 L537.8 264.1 L538.8 261.9 L539.8 260.7 L540.8 261.4 L541.8 261.7 L542.8 262.6 L543.7 263.3 L544.7 263.9 L545.7 261.8 L546.7 260.4 L547.7 260.0 L548.7 261.3 L549.7 261.5 L550.6 263.0 L551.6 262.6 L552.6 260.9 L553.6 260.6 L554.6 260.6 L555.6 261.2 L556.5 261.4 L557.5 262.6 L558.5 263.0 L559.5 260.8 L560.5 260.2 L561.5 259.7 L562.4 260.8 L563.4 260.5 L564.4 262.0 L565.4 262.1 L566.4 260.6 L567.4 259.7 L568.3 259.7 L569.3 260.2 L570.3 260.9 L571.3 261.4 L572.3 261.4 L573.3 260.5 L574.3 259.8 L575.2 259.6 L576.2 260.2 L577.2 260.8 L578.2 261.4 L579.2 261.2 L580.2 260.2 L581.1 259.5 L582.1 259.4 L583.1 260.0 L584.1 260.4 L585.1 261.0 L586.1 261.1 L587.0 259.2 L588.0 258.4 L589.0 258.2 L590.0 259.1 L591.0 258.9 L592.0 260.5 L592.9 260.5 L593.9 258.2 L594.9 258.3 L595.9 258.2 L596.9 257.4 L597.9 258.9 L598.8 260.0 L599.8 259.9 L600.8 257.3 L601.8 257.3 L602.8 256.6 L603.8 256.7 L604.8 257.3 L605.7 259.0 L606.7 258.5 L607.7 255.2 L608.7 255.1 L609.7 254.6 L610.7 255.6 L611.6 256.2 L612.6 256.8 L613.6 258.0 L614.6 253.7 L615.6 252.5 L616.6 253.8 L617.5 252.5 L618.5 254.5 L619.5 255.2 L620.5 255.4 L621.5 253.2 L622.5 251.3 L623.4 251.1 L624.4 251.1 L625.4 253.2 L626.4 253.8 L627.4 253.5 L628.4 251.0 L629.3 250.1 L630.3 250.7 L631.3 250.3 L632.3 251.5 L633.3 252.3 L634.3 252.5 L635.3 249.8 L636.2 249.3 L637.2 248.3 L638.2 248.7 L639.2 250.4 L640.2 250.5 L641.2 251.0 L642.1 249.1 L643.1 246.6 L644.1 247.8 L645.1 247.8 L646.1 247.9 L647.1 249.4 L648.0 249.6 L649.0 246.6 L650.0 245.7 L651.0 245.7 L652.0 246.3 L653.0 247.4 L653.9 247.6 L654.9 247.7 L655.9 245.0 L656.9 243.4 L657.9 243.8 L658.9 244.4 L659.9 245.1 L660.8 245.8 L661.8 247.8 L662.8 243.9 L663.8 243.3 L664.8 242.2 L665.8 243.6 L666.7 244.8 L667.7 246.4 L668.7 246.5 L669.7 243.0 L670.7 242.8 L671.7 241.7 L672.6 243.7 L673.6 244.6 L674.6 246.7 L675.6 247.0 L676.6 242.6 L677.6 241.7 L678.5 242.7 L679.5 243.2 L680.5 243.9 L681.5 245.0 L682.5 245.2 L683.5 242.3 L684.4 241.6 L685.4 242.4 L686.4 242.5 L687.4 244.0 L688.4 245.1 L689.4 245.4 L690.4 243.1 L691.3 241.9 L692.3 240.8 L693.3 242.9 L694.3 242.5 L695.3 244.1 L696.3 244.3 L697.2 242.4 L698.2 241.0 L699.2 240.9 L700.2 241.4 L701.2 242.0 L702.2 244.5 L703.1 245.8 L704.1 241.8 L705.1 241.6 L706.1 241.5 L707.1 242.0 L708.1 244.7 L709.0 245.1 L710.0 245.9 L711.0 243.3 L712.0 242.4 L713.0 242.6 L714.0 243.9 L715.0 244.5 L715.9 247.4 L716.9 247.0 L717.9 243.3 L718.9 242.2 L719.9 241.4 L720.9 240.8 L721.8 241.6 L722.8 244.4 L723.8 223.8 L724.8 194.9 L725.8 208.8 L726.8 232.2 L727.7 238.8 L728.7 239.9 L729.7 240.5 L730.7 239.7 L731.7 237.2 L732.7 234.3 L733.6 234.2 L734.6 235.8 L735.6 235.1 L736.6 237.6 L737.6 237.0 L738.6 233.4 L739.5 231.7 L740.5 232.3 L741.5 231.5 L742.5 232.4" stroke="#20bcd4"/>
<path d="M265.3 243.5 L266.3 244.2 L267.3 247.0 L268.3 261.9 L269.2 264.2 L270.2 244.8 L271.2 242.3 L272.2 242.7 L273.2 245.5 L274.2 250.0 L275.1 262.9 L276.1 264.9 L277.1 245.8 L278.1 240.8 L279.1 243.5 L280.1 245.7 L281.0 250.0 L282.0 263.6 L283.0 263.3 L284.0 247.3 L285.0 244.4 L286.0 245.8 L286.9 244.9 L287.9 250.3 L288.9 263.5 L289.9 265.0 L290.9 248.6 L291.9 244.8 L292.8 243.9 L293.8 246.0 L294.8 250.2 L295.8 262.7 L296.8 264.7 L297.8 242.1 L298.8 240.3 L299.7 239.6 L300.7 240.3 L301.7 246.6 L302.7 261.0 L303.7 264.1 L304.7 241.7 L305.6 236.8 L306.6 239.3 L307.6 239.8 L308.6 246.6 L309.6 264.4 L310.6 266.4 L311.5 242.3 L312.5 239.4 L313.5 239.9 L314.5 241.6 L315.5 247.0 L316.5 263.3 L317.4 262.9 L318.4 242.9 L319.4 236.1 L320.4 231.3 L321.4 232.0 L322.4 235.1 L323.4 262.4 L324.3 262.4 L325.3 233.3 L326.3 226.9 L327.3 228.5 L328.3 231.8 L329.3 241.1 L330.2 263.8 L331.2 263.2 L332.2 235.1 L333.2 231.1 L334.2 234.7 L335.2 235.4 L336.1 241.3 L337.1 262.5 L338.1 263.8 L339.1 239.2 L340.1 233.9 L341.1 235.0 L342.0 238.4 L343.0 242.1 L344.0 261.7 L345.0 266.9 L346.0 238.2 L347.0 233.4 L347.9 235.7 L348.9 239.8 L349.9 242.8 L350.9 265.1 L351.9 263.9 L352.9 239.8 L353.9 237.2 L354.8 238.0 L355.8 240.5 L356.8 248.5 L357.8 264.0 L358.8 265.0 L359.8 251.6 L360.7 249.1 L361.7 247.9 L362.7 250.8 L363.7 252.3 L364.7 264.4 L365.7 263.6 L366.6 242.0 L367.6 233.6 L368.6 232.0 L369.6 231.0 L370.6 240.3 L371.6 260.2 L372.5 263.7 L373.5 232.5 L374.5 227.1 L375.5 229.5 L376.5 231.1 L377.5 240.1 L378.5 262.9 L379.4 262.6 L380.4 232.5 L381.4 224.7 L382.4 227.0 L383.4 231.1 L384.4 237.3 L385.3 259.5 L386.3 262.9 L387.3 233.0 L388.3 222.7 L389.3 224.0 L390.3 229.7 L391.2 235.4 L392.2 261.2 L393.2 261.7 L394.2 234.8 L395.2 229.6 L396.2 230.0 L397.1 230.1 L398.1 240.6 L399.1 262.5 L400.1 262.5 L401.1 231.9 L402.1 227.9 L403.0 229.7 L404.0 230.1 L405.0 237.4 L406.0 262.7 L407.0 261.4 L408.0 233.3 L409.0 226.9 L409.9 226.1 L410.9 230.0 L411.9 235.3 L412.9 259.5 L413.9 258.1 L414.9 232.2 L415.8 226.9 L416.8 226.9 L417.8 229.4 L418.8 234.8 L419.8 252.8 L420.8 255.2 L421.7 231.8 L422.7 225.6 L423.7 226.0 L424.7 228.1 L425.7 233.4 L426.7 254.2 L427.6 257.5 L428.6 230.7 L429.6 223.5 L430.6 226.6 L431.6 226.9 L432.6 232.3 L433.5 253.6 L434.5 255.2 L435.5 233.3 L436.5 230.0 L437.5 229.1 L438.5 232.1 L439.5 236.0 L440.4 254.9 L441.4 254.7 L442.4 230.1 L443.4 226.0 L444.4 227.8 L445.4 230.6 L446.3 234.3 L447.3 254.5 L448.3 255.2 L449.3 232.1 L450.3 227.5 L451.3 228.5 L452.2 227.9 L453.2 236.1 L454.2 252.5 L455.2 256.2 L456.2 231.3 L457.2 227.5 L458.1 227.7 L459.1 231.2 L460.1 235.9 L461.1 252.5 L462.1 256.8 L463.1 232.6 L464.1 229.4 L465.0 230.6 L466.0 233.1 L467.0 238.4 L468.0 252.6 L469.0 254.6 L470.0 230.7 L470.9 225.4 L471.9 225.4 L472.9 229.4 L473.9 233.4 L474.9 253.7 L475.9 255.3 L476.8 228.2 L477.8 224.4 L478.8 225.5 L479.8 230.8 L480.8 235.2 L481.8 253.3 L482.7 254.8 L483.7 228.9 L484.7 223.2 L485.7 226.4 L486.7 225.9 L487.7 234.0 L488.6 253.3 L489.6 254.0 L490.6 228.7 L491.6 225.1 L492.6 226.6 L493.6 228.0 L494.6 233.1 L495.5 251.7 L496.5 254.0 L497.5 231.0 L498.5 226.2 L499.5 225.8 L500.5 229.1 L501.4 234.1 L502.4 255.4 L503.4 256.6 L504.4 228.7 L505.4 222.9 L506.4 225.1 L507.3 228.5 L508.3 232.9 L509.3 253.2 L510.3 256.5 L511.3 230.7 L512.3 223.0 L513.2 224.2 L514.2 226.3 L515.2 233.6 L516.2 254.2 L517.2 256.8 L518.2 232.2 L519.2 227.8 L520.1 226.6 L521.1 228.4 L522.1 234.5 L523.1 254.8 L524.1 256.1 L525.1 230.9 L526.0 223.8 L527.0 227.9 L528.0 227.4 L529.0 233.8 L530.0 253.3 L531.0 253.6 L531.9 231.4 L532.9 225.8 L533.9 228.3 L534.9 230.3 L535.9 236.4 L536.9 254.1 L537.8 256.5 L538.8 235.7 L539.8 232.1 L540.8 237.6 L541.8 237.9 L542.8 242.0 L543.7 253.5 L544.7 254.8 L545.7 239.2 L546.7 236.5 L547.7 237.6 L548.7 237.3 L549.7 239.0 L550.6 252.9 L551.6 254.9 L552.6 230.1 L553.6 226.4 L554.6 224.9 L555.6 227.9 L556.5 235.3 L557.5 254.4 L558.5 253.6 L559.5 230.8 L560.5 225.4 L561.5 225.4 L562.4 226.4 L563.4 234.2 L564.4 253.3 L565.4 254.9 L566.4 231.9 L567.4 224.2 L568.3 228.2 L569.3 226.5 L570.3 235.0 L571.3 253.6 L572.3 252.9 L573.3 227.5 L574.3 224.8 L575.2 224.7 L576.2 226.7 L577.2 231.8 L578.2 253.0 L579.2 252.4 L580.2 223.3 L581.1 218.7 L582.1 218.7 L583.1 220.2 L584.1 229.1 L585.1 249.5 L586.1 251.6 L587.0 226.6 L588.0 223.0 L589.0 221.9 L590.0 222.3 L591.0 230.8 L592.0 250.1 L592.9 251.0 L593.9 224.0 L594.9 220.5 L595.9 219.1 L596.9 222.3 L597.9 226.4 L598.8 249.3 L599.8 252.8 L600.8 216.3 L601.8 210.9 L602.8 213.6 L603.8 213.3 L604.8 221.0 L605.7 247.2 L606.7 249.6 L607.7 218.0 L608.7 211.3 L609.7 213.0 L610.7 215.5 L611.6 221.0 L612.6 249.5 L613.6 253.1 L614.6 214.1 L615.6 208.0 L616.6 209.2 L617.5 211.3 L618.5 221.5 L619.5 249.6 L620.5 252.9 L621.5 212.5 L622.5 204.6 L623.4 207.3 L624.4 212.8 L625.4 216.9 L626.4 245.8 L627.4 250.1 L628.4 216.3 L629.3 204.7 L630.3 207.4 L631.3 209.9 L632.3 221.6 L633.3 245.6 L634.3 251.7 L635.3 207.5 L636.2 201.4 L637.2 201.9 L638.2 201.5 L639.2 212.1 L640.2 243.4 L641.2 249.4 L642.1 212.5 L643.1 204.2 L644.1 208.6 L645.1 208.9 L646.1 214.4 L647.1 243.2 L648.0 245.1 L649.0 209.3 L650.0 199.4 L651.0 200.4 L652.0 203.3 L653.0 213.9 L653.9 245.0 L654.9 248.6 L655.9 205.9 L656.9 198.4 L657.9 203.6 L658.9 203.7 L659.9 214.3 L660.8 241.6 L661.8 243.1 L662.8 205.0 L663.8 195.5 L664.8 199.5 L665.8 200.8 L666.7 213.3 L667.7 243.1 L668.7 245.8 L669.7 204.1 L670.7 201.0 L671.7 199.1 L672.6 205.3 L673.6 209.3 L674.6 243.3 L675.6 246.5 L676.6 205.9 L677.6 193.9 L678.5 197.1 L679.5 198.5 L680.5 210.2 L681.5 243.3 L682.5 244.8 L683.5 199.7 L684.4 187.6 L685.4 194.7 L686.4 197.2 L687.4 203.8 L688.4 242.8 L689.4 240.5 L690.4 203.8 L691.3 195.1 L692.3 197.1 L693.3 199.2 L694.3 213.6 L695.3 238.7 L696.3 244.9 L697.2 203.6 L698.2 200.7 L699.2 199.3 L700.2 205.7 L701.2 214.9 L702.2 244.1 L703.1 245.8 L704.1 208.1 L705.1 198.1 L706.1 202.7 L707.1 207.5 L708.1 213.9 L709.0 247.4 L710.0 250.4 L711.0 224.2 L712.0 229.9 L713.0 240.9 L714.0 241.3 L715.0 244.8 L715.9 251.1 L716.9 252.7 L717.9 242.5 L718.9 240.5 L719.9 241.5 L720.9 235.9 L721.8 233.1 L722.8 242.8 L723.8 242.7 L724.8 220.3 L725.8 216.8 L726.8 216.7 L727.7 211.2 L728.7 210.9 L729.7 240.0 L730.7 241.8 L731.7 201.8 L732.7 194.1 L733.6 194.1 L734.6 199.0 L735.6 202.7 L736.6 236.8 L737.6 239.8 L738.6 193.8 L739.5 184.1 L740.5 190.8 L741.5 192.9 L742.5 199.3" stroke="#4285f4"/><circle cx="592" cy="282.900" r="4.600" fill="#969696" stroke="none"/></svg><div class="abs" style="left:588px;top:278.900px;width:8px;text-align:center;font-size:6px;line-height:8px;color:#fff">1</div><div class="abs xl" style="left:245.4px">9/20/17</div><div class="abs xl" style="left:305.2px">11/20/17</div><div class="abs xl" style="left:365.7px">1/20/18</div><div class="abs xl" style="left:424.9px">3/22/18</div><div class="abs xl" style="left:485.0px">5/22/18</div><div class="abs xl" style="left:544.7px">7/22/18</div><div class="abs xl" style="left:603.9px">9/21/18</div><div class="abs xl" style="left:664.2px">11/21/18</div>
<div class="abs card" style="left:227px;top:330.800px;width:543.500px;height:90px"></div>
<div class="abs tab tsel" style="left:235.8px;width:120.0px">QUERIES</div><div class="abs tab" style="left:321.8px;width:120.0px">PAGES</div><div class="abs tab" style="left:412.5px;width:120.0px">COUNTRIES</div><div class="abs tab" style="left:503.5px;width:120.0px">DEVICES</div><div class="abs tab" style="left:615.5px;width:120.0px">SEARCH APPEARANCE</div>
<div class="abs" style="left:253.200px;top:367px;width:86px;height:1.800px;background:#5c5c5c"></div>
<div class="abs" style="left:227px;top:368.500px;width:543.500px;height:1px;background:#e4e4e4"></div>
<svg class="abs" style="left:715.400px;top:375.300px" width="13" height="13" viewBox="0 0 24 24"><path d="M10 18h4v-2h-4v2zM3 6v2h18V6H3zm3 7h12v-2H6v2z" fill="#444"/></svg>
<svg class="abs" style="left:744px;top:375.500px" width="13" height="13" viewBox="0 0 24 24"><path d="M19 9h-4V3H9v6H5l7 7 7-7zM5 18v2h14v-2H5z" fill="#333"/></svg>
<div class="abs" style="left:0;top:392px;width:834px;height:19px;background:linear-gradient(to bottom,rgba(0,0,0,0),rgba(0,0,0,.048))"></div>
</body></html>
